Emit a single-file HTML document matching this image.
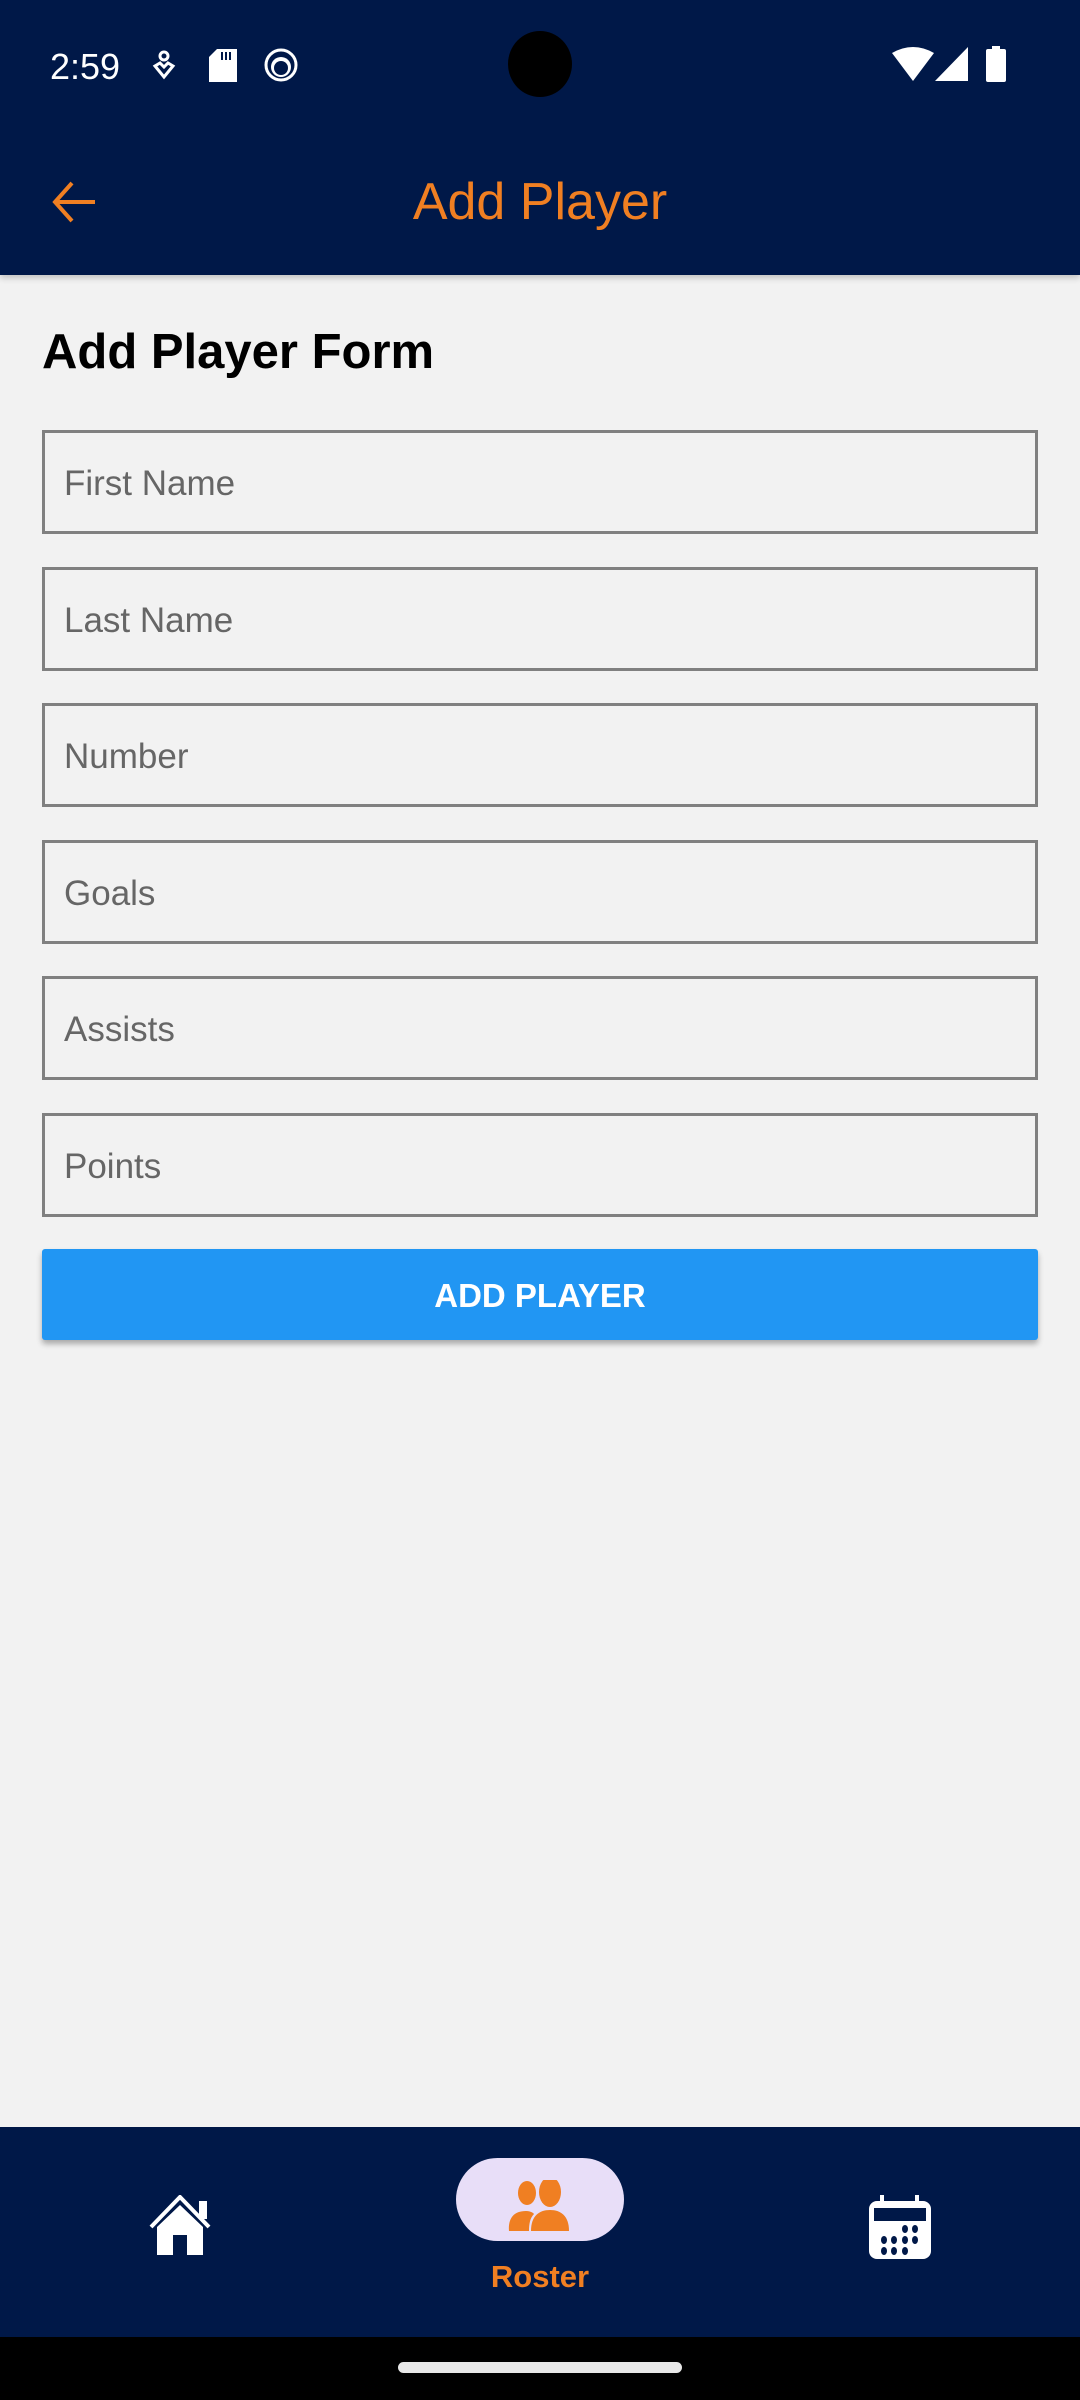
<!DOCTYPE html>
<html><head><meta charset="utf-8"><style>
*{margin:0;padding:0;box-sizing:border-box}
body{width:1080px;height:2400px;background:#f2f2f2;font-family:"Liberation Sans",sans-serif;position:relative;overflow:hidden}
.hdr{position:absolute;left:0;top:0;width:1080px;height:275px;background:#001848;box-shadow:0 3px 6px rgba(0,0,0,.2)}
.time{position:absolute;left:50px;top:46px;color:#fff;font-size:36px}
.cam{position:absolute;left:508px;top:31px;width:64px;height:66px;border-radius:50%;background:#000}
.title{position:absolute;left:0;width:1080px;top:172px;text-align:center;color:#f07f22;font-size:52px;font-weight:500}
h1{position:absolute;left:42px;top:324px;font-size:49px;font-weight:bold;color:#000}
.in{position:absolute;left:42px;width:996px;height:104px;border:3px solid #808080;font-size:35px;color:#666;padding-left:19px;line-height:102px}
.btn{position:absolute;left:42px;top:1249px;width:996px;height:91px;background:#2196f3;color:#fff;font-size:33px;font-weight:bold;text-align:center;line-height:94px;box-shadow:0 4px 6px rgba(0,0,0,.3);border-radius:3px}
.nav{position:absolute;left:0;top:2127px;width:1080px;height:210px;background:#001848}
.blk{position:absolute;left:0;top:2337px;width:1080px;height:63px;background:#000}
.handle{position:absolute;left:398px;top:2362px;width:284px;height:11px;border-radius:6px;background:#e8e8e8}
.pill{position:absolute;left:456px;top:2158px;width:168px;height:83px;border-radius:42px;background:#e8def8}
.lbl{position:absolute;left:440px;width:200px;top:2259px;text-align:center;color:#f07f22;font-size:31px;font-weight:bold}
</style></head><body>
<div class="hdr">
<div class="time">2:59</div>
<svg style="position:absolute;left:152px;top:50px" width="24" height="30" viewBox="0 0 24 30"><circle cx="12" cy="6" r="4" fill="none" stroke="#fff" stroke-width="3"/><path d="M3 16 L12 27 L21 16 L16 13 L12 17 L8 13Z" fill="none" stroke="#fff" stroke-width="3"/></svg>
<svg style="position:absolute;left:209px;top:49px" width="28" height="33"><path d="M8 0H28V33H0V8Z" fill="#fff"/><rect x="12" y="3" width="2" height="8" fill="#001848"/><rect x="16" y="3" width="2" height="8" fill="#001848"/><rect x="20" y="3" width="2" height="8" fill="#001848"/></svg>
<svg style="position:absolute;left:264px;top:48px" width="34" height="34"><circle cx="17" cy="17" r="15" fill="none" stroke="#fff" stroke-width="3"/><circle cx="17" cy="19" r="10" fill="#fff"/><circle cx="17" cy="20" r="7" fill="#001848"/></svg>
<div class="cam"></div>
<svg style="position:absolute;left:892px;top:47px" width="42" height="36"><path d="M0 6 Q21 -6 42 6 L21 34Z" fill="#fff"/></svg>
<svg style="position:absolute;left:935px;top:47px" width="33" height="34"><path d="M33 0V34H0Z" fill="#fff"/></svg>
<svg style="position:absolute;left:986px;top:46px" width="20" height="36"><rect x="6" y="0" width="8" height="4" fill="#fff"/><rect x="0" y="3" width="20" height="33" rx="2" fill="#fff"/></svg>
<svg style="position:absolute;left:50px;top:178px" width="48" height="48" viewBox="0 0 48 48"><path d="M22 5 L5 24 L22 43 M5 24 H45" fill="none" stroke="#f07f22" stroke-width="4"/></svg>
<div class="title">Add Player</div>
</div>
<h1>Add Player Form</h1>
<div class="in" style="top:430px">First Name</div>
<div class="in" style="top:567px">Last Name</div>
<div class="in" style="top:703px">Number</div>
<div class="in" style="top:840px">Goals</div>
<div class="in" style="top:976px">Assists</div>
<div class="in" style="top:1113px">Points</div>
<div class="btn">ADD PLAYER</div>
<div class="nav"></div>
<svg style="position:absolute;left:147px;top:2195px" width="66" height="62" viewBox="0 0 66 62"><path d="M4 32 L33 2 L62 32" fill="none" stroke="#fff" stroke-width="4"/><rect x="52" y="6" width="8" height="18" fill="#fff"/><path d="M10 32 L33 10 L56 32 V60 H40 V40 H26 V60 H10Z" fill="#fff"/></svg>
<div class="pill"></div>
<svg style="position:absolute;left:508px;top:2180px" width="66" height="52" viewBox="0 0 66 52"><ellipse cx="19" cy="13" rx="9" ry="12" fill="#f07f22"/><ellipse cx="42" cy="12" rx="11" ry="15" fill="#f07f22"/><path d="M1 51 C0 38 6 31 18 31 C24 31 26 34 26 34 C22 38 21 44 21 51Z" fill="#f07f22"/><path d="M23 51 C23 36 31 30 42 30 C53 30 61 36 61 51Z" fill="#f07f22"/></svg>
<div class="lbl">Roster</div>
<svg style="position:absolute;left:869px;top:2195px" width="62" height="64" viewBox="0 0 62 64"><rect x="11" y="0" width="4" height="10" fill="#fff"/><rect x="46" y="0" width="4" height="10" fill="#fff"/><rect x="0" y="6" width="62" height="58" rx="8" fill="#fff"/><rect x="5" y="13" width="52" height="13" fill="#001848"/><g fill="#001848"><ellipse cx="36" cy="34" rx="3" ry="4"/><ellipse cx="46" cy="34" rx="3" ry="4"/><ellipse cx="15" cy="45" rx="3" ry="4"/><ellipse cx="25" cy="45" rx="3" ry="4"/><ellipse cx="36" cy="45" rx="3" ry="4"/><ellipse cx="46" cy="45" rx="3" ry="4"/><ellipse cx="15" cy="56" rx="3" ry="4"/><ellipse cx="25" cy="56" rx="3" ry="4"/><ellipse cx="36" cy="56" rx="3" ry="4"/></g></svg>
<div class="blk"></div>
<div class="handle"></div>
</body></html>
